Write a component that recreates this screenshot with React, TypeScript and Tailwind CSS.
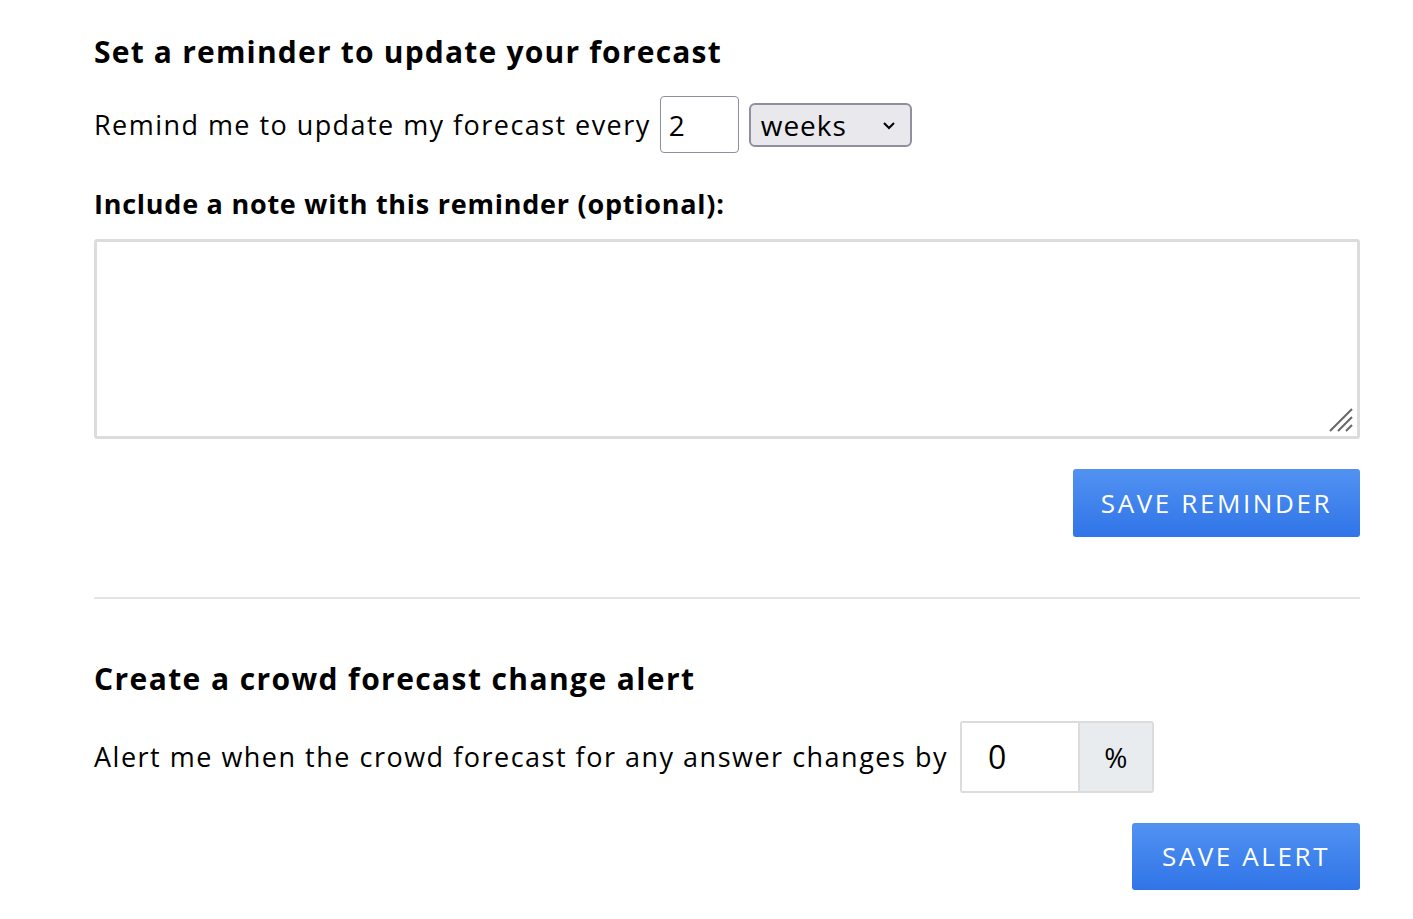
import React from "react";

export default function App() {
  const font = { fontFamily: "'Open Sans', 'Noto Sans', sans-serif" } as React.CSSProperties;
  return (
    <div className="min-h-[919px] w-[1413px] bg-white text-black" style={font}>
      <div className="ml-[94px] w-[1266px] pt-[30px]">
        <h2 className="text-[30px] font-bold leading-[44px] tracking-[1.2px]">Set a reminder to update your forecast</h2>
        <div className="mt-[22px] flex items-center">
          <span className="text-[27px] leading-[34px] tracking-[1.45px]">Remind me to update my forecast every</span>
          <div className="ml-[9px] flex h-[57px] w-[79px] items-center rounded-[4px] border border-[#8f8f9d] pl-[8px] text-[28px]">2</div>
          <div className="ml-[10px] flex h-[44px] w-[163px] items-center justify-between rounded-[6px] border-2 border-[#8f8f9d] bg-[#e9e9ed] pl-[10px] pr-[14px] text-[28px] tracking-[1px]">
            <span>weeks</span>
            <svg width="14" height="10" viewBox="0 0 14 10"><path d="M2 3l5 5 5-5" fill="none" stroke="#000" strokeWidth="2" /></svg>
          </div>
        </div>
        <div className="mt-[31px] text-[27px] font-bold leading-[40px] tracking-[0.75px]">Include a note with this reminder (optional):</div>
        <div className="relative mt-[15px] h-[200px] w-full rounded-[3px] border-[3px] border-[#dcdcdc] bg-white">
          <svg className="absolute bottom-[3px] right-[3px]" width="26" height="26" viewBox="0 0 26 26">
            <path d="M2 24L24 2M10 24L24 10M18 24L24 18" stroke="#666" strokeWidth="2" />
          </svg>
        </div>
        <div className="mt-[30px] flex justify-end">
          <button className="h-[68px] w-[287px] rounded-[3px] bg-gradient-to-b from-[#5192f1] to-[#3074e8] text-[26px] tracking-[2.6px] text-white">SAVE REMINDER</button>
        </div>
        <hr className="mt-[60px] border-t-2 border-[#e2e4e7]" />
        <h2 className="mt-[58px] text-[30px] font-bold leading-[44px] tracking-[1.4px]">Create a crowd forecast change alert</h2>
        <div className="mt-[20px] flex items-center">
          <span className="text-[27px] leading-[34px] tracking-[1.5px]">Alert me when the crowd forecast for any answer changes by</span>
          <div className="ml-[12px] flex h-[72px] w-[194px] rounded-[3px] border-2 border-[#dcdcdc]">
            <div className="flex w-[116px] items-center bg-white pl-[26px] text-[32px]">0</div>
            <div className="flex flex-1 items-center justify-center border-l-2 border-[#dcdcdc] bg-[#e9ecef] text-[28px]">%</div>
          </div>
        </div>
        <div className="mt-[30px] flex justify-end">
          <button className="h-[67px] w-[228px] rounded-[3px] bg-gradient-to-b from-[#5192f1] to-[#3074e8] text-[26px] tracking-[2.6px] text-white">SAVE ALERT</button>
        </div>
      </div>
    </div>
  );
}
